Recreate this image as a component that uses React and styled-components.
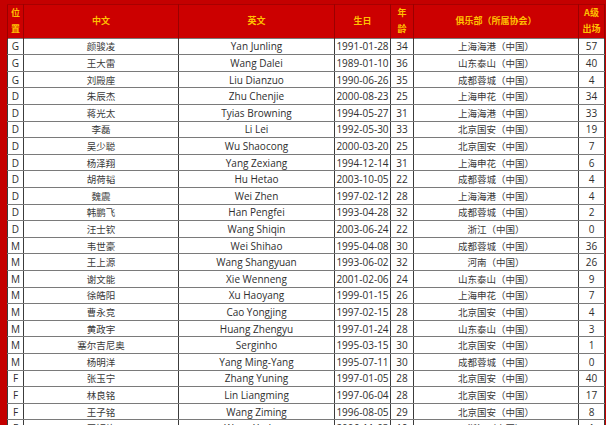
import styled, { createGlobalStyle } from "styled-components";

const GlobalStyle = createGlobalStyle`
  html, body {
    margin: 0;
    padding: 0;
    background: #c40000;
    overflow: hidden;
  }
`;

const players = [
  ["G", "颜骏凌", "Yan Junling", "1991-01-28", 34, "上海海港", 57],
  ["G", "王大雷", "Wang Dalei", "1989-01-10", 36, "山东泰山", 40],
  ["G", "刘殿座", "Liu Dianzuo", "1990-06-26", 35, "成都蓉城", 4],
  ["D", "朱辰杰", "Zhu Chenjie", "2000-08-23", 25, "上海申花", 34],
  ["D", "蒋光太", "Tyias Browning", "1994-05-27", 31, "上海海港", 33],
  ["D", "李磊", "Li Lei", "1992-05-30", 33, "北京国安", 19],
  ["D", "吴少聪", "Wu Shaocong", "2000-03-20", 25, "北京国安", 7],
  ["D", "杨泽翔", "Yang Zexiang", "1994-12-14", 31, "上海申花", 6],
  ["D", "胡荷韬", "Hu Hetao", "2003-10-05", 22, "成都蓉城", 4],
  ["D", "魏震", "Wei Zhen", "1997-02-12", 28, "上海海港", 4],
  ["D", "韩鹏飞", "Han Pengfei", "1993-04-28", 32, "成都蓉城", 2],
  ["D", "汪士钦", "Wang Shiqin", "2003-06-24", 22, "浙江", 0],
  ["M", "韦世豪", "Wei Shihao", "1995-04-08", 30, "成都蓉城", 36],
  ["M", "王上源", "Wang Shangyuan", "1993-06-02", 32, "河南", 26],
  ["M", "谢文能", "Xie Wenneng", "2001-02-06", 24, "山东泰山", 9],
  ["M", "徐皓阳", "Xu Haoyang", "1999-01-15", 26, "上海申花", 7],
  ["M", "曹永竞", "Cao Yongjing", "1997-02-15", 28, "北京国安", 4],
  ["M", "黄政宇", "Huang Zhengyu", "1997-01-24", 28, "山东泰山", 3],
  ["M", "塞尔吉尼奥", "Serginho", "1995-03-15", 30, "北京国安", 1],
  ["M", "杨明洋", "Yang Ming-Yang", "1995-07-11", 30, "成都蓉城", 0],
  ["F", "张玉宁", "Zhang Yuning", "1997-01-05", 28, "北京国安", 40],
  ["F", "林良铭", "Lin Liangming", "1997-06-04", 28, "北京国安", 17],
  ["F", "王子铭", "Wang Ziming", "1996-08-05", 29, "北京国安", 8],
  ["F", "王钰栋", "Wang Yudong", "2006-11-03", 19, "浙江", 1],
];

const widths = [16, 155, 156, 56, 23, 165, 26];

const Page = styled.div`
  padding: 4px 2px 0 7px;
  background: #c40000;
`;

const Table = styled.table`
  width: 597px;
  table-layout: fixed;
  border-collapse: collapse;
  font-family: "Open Sans", "Noto Sans CJK SC", sans-serif;
`;

const Head = styled.th`
  height: 32.7px;
  padding: 0;
  background: #cc0000;
  border-top: 1px solid #a80000;
  border-left: 1px solid #9a0000;
  border-right: 1px solid #9a0000;
  color: #ffc000;
  font-family: "Noto Sans CJK SC", sans-serif;
  font-size: 9px;
  font-weight: 700;
  line-height: ${(p) => (p.$stack ? "16px" : "12px")};
  text-align: center;
  vertical-align: middle;
`;

const Row = styled.tr`
  height: 16.6px;
`;

const Cell = styled.td`
  padding: 0;
  background: #fff;
  border: 1px solid #7a7a7a;
  border-left-color: #3c3c3c;
  border-right-color: #3c3c3c;
  color: ${(p) => (p.$cjk ? "#3a3a3a" : "#2e2e2e")};
  font-family: ${(p) =>
    p.$cjk ? '"Noto Sans CJK SC", sans-serif' : '"Open Sans", sans-serif'};
  font-size: ${(p) => (p.$cjk ? "9.5px" : "10px")};
  line-height: 14px;
  text-align: center;
  white-space: nowrap;
  overflow: hidden;
`;

export default function App() {
  return (
    <Page>
      <GlobalStyle />
      <Table>
        <colgroup>
          {widths.map((w, i) => (
            <col key={i} style={{ width: w }} />
          ))}
        </colgroup>
        <thead>
          <tr>
            <Head $stack>
              位<br />置
            </Head>
            <Head>中文</Head>
            <Head>英文</Head>
            <Head>生日</Head>
            <Head $stack>
              年<br />龄
            </Head>
            <Head>俱乐部（所属协会）</Head>
            <Head $stack>
              A级<br />出场
            </Head>
          </tr>
        </thead>
        <tbody>
          {players.map((p, i) => (
            <Row key={i}>
              <Cell>{p[0]}</Cell>
              <Cell $cjk>{p[1]}</Cell>
              <Cell>{p[2]}</Cell>
              <Cell>{p[3]}</Cell>
              <Cell>{p[4]}</Cell>
              <Cell $cjk>{p[5]}（中国）</Cell>
              <Cell>{p[6]}</Cell>
            </Row>
          ))}
        </tbody>
      </Table>
    </Page>
  );
}
